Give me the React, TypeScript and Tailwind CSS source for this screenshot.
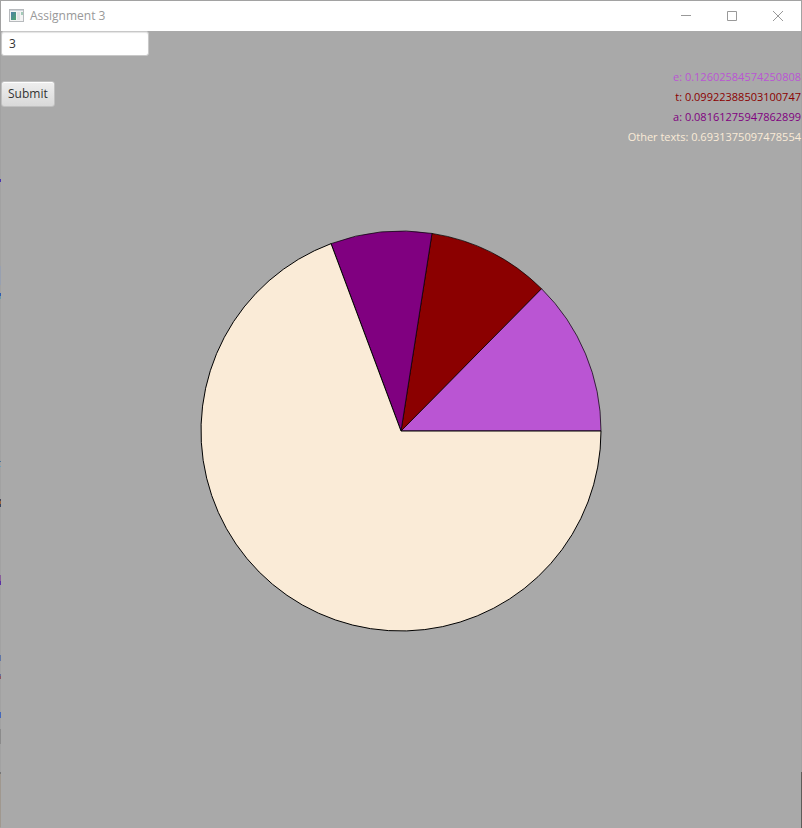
import { useState } from "react";

type Slice = { label: string; value: number; text: string; fill: string; color: string; stroke: string };

const slices: Slice[] = [
  { label: "e", value: 0.12602584574250808, text: "0.12602584574250808", fill: "fill-[#ba55d3]", color: "text-[#ba55d3]", stroke: "stroke-black/70" },
  { label: "t", value: 0.09922388503100747, text: "0.09922388503100747", fill: "fill-[#8b0000]", color: "text-[#8b0000]", stroke: "stroke-black/70" },
  { label: "a", value: 0.08161275947862899, text: "0.08161275947862899", fill: "fill-[#800080]", color: "text-[#800080]", stroke: "stroke-black/70" },
  { label: "Other texts", value: 0.6931375097478554, text: "0.6931375097478554", fill: "fill-[#faebd7]", color: "text-[#faebd7]", stroke: "stroke-black" },
];

function slicePath(start: number, size: number) {
  const point = (turn: number) => {
    const angle = turn * 2 * Math.PI;
    return `${201 + 200 * Math.cos(angle)} ${201 - 200 * Math.sin(angle)}`;
  };
  return `M201 201L${point(start)}A200 200 0 ${size > 0.5 ? 1 : 0} 0 ${point(start + size)}Z`;
}

function PieChart() {
  let turn = 0;
  return (
    <svg viewBox="0 0 402 402" className="h-[402px] w-[402px]" role="img" aria-label="Letter frequencies">
      {slices.map((slice) => {
        const d = slicePath(turn, slice.value);
        turn += slice.value;
        return <path key={slice.label} d={d} className={`${slice.fill} ${slice.stroke}`} strokeWidth="1" />;
      })}
    </svg>
  );
}

function AppIcon() {
  return (
    <svg width="16" height="14" viewBox="0 0 16 14" shapeRendering="crispEdges" aria-hidden="true">
      <defs>
        <linearGradient id="screen" x1="0" y1="0" x2="1" y2="1">
          <stop offset="0" stopColor="#4d7fa8" />
          <stop offset="1" stopColor="#4fa66e" />
        </linearGradient>
      </defs>
      <rect x="0" y="0" width="15" height="13" fill="#b7babd" />
      <rect x="1" y="1" width="13" height="11" fill="#f4f4f4" />
      <rect x="1" y="1" width="13" height="1" fill="#cfd5dc" />
      <rect x="2" y="3" width="5" height="8" fill="url(#screen)" />
      <rect x="8" y="3" width="3" height="8" fill="#e2e4e6" />
      <rect x="12" y="3" width="2" height="3" fill="#a3cbb8" />
    </svg>
  );
}

const windowButton = "flex h-[30px] w-[46px] items-center justify-center text-[#999999]";

function TitleBar() {
  return (
    <header className="flex h-[30px] items-center bg-white">
      <div className="flex flex-1 items-center gap-[5px] pl-2">
        <AppIcon />
        <h1 className="text-[12px] leading-4 text-[#999999]">Assignment 3</h1>
      </div>
      <button type="button" aria-label="Minimize" className={windowButton}>
        <svg width="10" height="10" fill="none" stroke="currentColor"><path d="M0 4.5H10" /></svg>
      </button>
      <button type="button" aria-label="Maximize" className={windowButton}>
        <svg width="10" height="10" fill="none" stroke="currentColor"><path d="M.5 .5H9.5V9.5H.5Z" /></svg>
      </button>
      <button type="button" aria-label="Close" className={windowButton}>
        <svg width="10" height="10" fill="none" stroke="currentColor"><path d="M0 0L10 10M10 0L0 10" /></svg>
      </button>
    </header>
  );
}

/* Slivers of the desktop that show along the window's left edge. */
const slivers = [
  { y: 179, h: 3, fill: "#4a35b0" },
  { y: 266, h: 19, fill: "#98a0b0" },
  { y: 293, h: 3, fill: "#2e5cb0" },
  { y: 296, h: 3, fill: "#6b9aac" },
  { y: 461, h: 1, fill: "#4b7397" },
  { y: 466, h: 1, fill: "#6ca3bd" },
  { y: 499, h: 2, fill: "#484555" },
  { y: 501, h: 3, fill: "#9a6540" },
  { y: 504, h: 3, fill: "#3a4560" },
  { y: 575, h: 6, fill: "#895f9a" },
  { y: 581, h: 4, fill: "#5b31a4" },
  { y: 655, h: 6, fill: "#6076a5" },
  { y: 674, h: 2, fill: "#68709a" },
  { y: 676, h: 3, fill: "#8b5564" },
  { y: 712, h: 6, fill: "#4568ba" },
  { y: 729, h: 15, fill: "#8b8b8b" },
  { y: 772, h: 2, fill: "#777777" },
  { y: 774, h: 54, fill: "#a0988f" },
];

export default function App() {
  const [count, setCount] = useState("3");
  return (
    <div className="relative flex min-h-screen flex-col border-x border-t border-[#a2a2a2] bg-[#a9a9a9] font-['Open_Sans','Noto_Sans',sans-serif]">
      <TitleBar />
      <main className="flex flex-1 flex-col">
        <div className="flex items-start justify-between">
          <form className="flex flex-col items-start gap-[25px]" onSubmit={(event) => event.preventDefault()}>
            <input
              aria-label="Number of letters"
              value={count}
              onChange={(event) => setCount(event.target.value)}
              className="h-[25px] w-[148px] rounded-[3px] border border-[#c8c8c8] bg-white px-[7px] text-[12px] leading-4 text-[#333333] shadow-[inset_0_1px_1px_#e4e4e4] outline-none"
            />
            <button
              type="submit"
              className="h-[26px] rounded-[3px] border border-[#c0c0c0] bg-linear-to-b from-[#efefef] to-[#d9d9d9] px-[6px] text-[12px] leading-4 text-[#333333] shadow-[inset_0_1px_0_#ffffff]"
            >
              Submit
            </button>
          </form>
          <ul className="pt-9 text-right text-[11px] leading-5">
            {slices.map((slice) => (
              <li key={slice.label} className={slice.color}>{`${slice.label}: ${slice.text}`}</li>
            ))}
          </ul>
        </div>
        <div className="mt-[83px] flex justify-center">
          <PieChart />
        </div>
      </main>
      <svg className="absolute -top-px -left-px h-full w-px" shapeRendering="crispEdges" aria-hidden="true">
        {slivers.map((s) => <rect key={s.y} y={s.y} width="1" height={s.h} fill={s.fill} />)}
      </svg>
      <div className="absolute -right-px bottom-0 h-14 w-px bg-[#5f5d5a]" aria-hidden="true" />
    </div>
  );
}
